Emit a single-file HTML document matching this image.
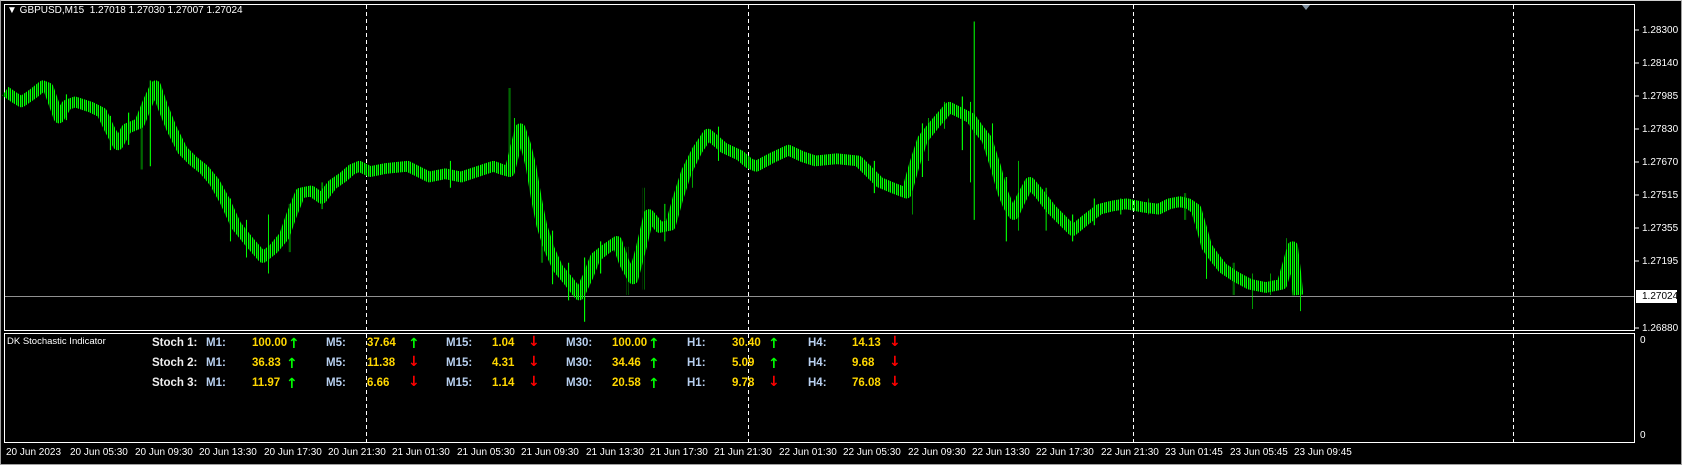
<!DOCTYPE html>
<html><head><meta charset="utf-8"><style>
html,body{margin:0;padding:0;background:#000;width:1682px;height:465px;overflow:hidden;font-family:"Liberation Sans",Arial,sans-serif;}
#w{position:relative;width:1680px;height:463px;border:1px solid #a0a0a0;border-top-color:#d0d0d0;background:#000}
.t{position:absolute;font-size:10px;color:#fff;white-space:nowrap}
.r{position:absolute;font-size:11.5px;font-weight:bold;white-space:nowrap}
.a{font-family:"DejaVu Sans",sans-serif;font-size:14px;line-height:14px}
.lb{color:#f0f0f0}.tf{color:#b8d0f0}.v{color:#ffd700}.up{color:#00ff00}.dn{color:#ff0000}
</style></head><body><div id="w">
<svg width="1682" height="465" style="position:absolute;left:-1px;top:-1px">
<defs>
<pattern id="p" width="4" height="10" patternUnits="userSpaceOnUse"><rect x="3" y="0" width="1" height="10" fill="#000"/><rect x="1" y="0" width="1" height="10" fill="#000" opacity="0.6"/></pattern>
<mask id="m"><rect x="0" y="0" width="1682" height="465" fill="#fff"/><rect x="0" y="0" width="1682" height="330" fill="url(#p)"/></mask>
</defs>
<rect x="4.5" y="4.5" width="1630" height="326" fill="none" stroke="#fff"/>
<rect x="4.5" y="333.5" width="1630" height="109" fill="none" stroke="#fff"/>
<g stroke="#fff" stroke-dasharray="4,3" stroke-width="1">
<line x1="366.5" y1="5" x2="366.5" y2="442"/><line x1="748.5" y1="5" x2="748.5" y2="442"/>
<line x1="1133.5" y1="5" x2="1133.5" y2="442"/><line x1="1513.5" y1="5" x2="1513.5" y2="442"/>
</g>
<line x1="5" y1="296.5" x2="1634" y2="296.5" stroke="#909090"/>
<polygon points="1302,5 1310,5 1306,10" fill="#8090a0"/>
<g mask="url(#m)"><g transform="scale(1.0727)" fill="none" stroke="#00ff00" stroke-linejoin="round">
<polyline stroke-width="10" points="5,85 12,90 20,95 30,88 40,80 45,82 55,110 62,98 70,95 85,100 95,105 102,120 110,135 118,120 130,115 138,95 145,80 152,100 160,120 170,140 180,150 190,158 200,170 210,188 220,210 232,225 245,240 255,232 265,220 272,200 280,180 290,178 300,185 310,172 320,165 328,158 335,155 345,160 360,157 380,155 390,160 400,165 415,162 430,165 445,160 460,155 468,158 475,160 480,140 485,120 490,135 495,155 500,185 505,210 512,232 520,250 530,262 540,275 548,258 555,240 565,232 575,225 582,245 590,260 598,230 605,200 615,212 625,210 632,185 640,160 650,140 660,125 675,138 690,145 698,152 705,155 720,147 735,140 748,146 760,150 780,148 800,150 810,160 820,170 832,175 845,180 852,155 860,130 872,115 885,100 895,105 905,110 912,120 920,130 928,155 935,180 940,192 945,200 952,185 960,170 970,182 980,195 990,205 1000,215 1012,205 1025,195 1037,192 1050,190 1065,193 1080,195 1090,190 1100,188 1108,190 1115,195 1120,212 1125,230 1132,240 1140,250 1152,258 1165,265 1180,268 1195,265 1200,248 1205,230 1208,255 1210,275"/>
<g stroke-width="1.4">
<path d="M140 75V155M132 110V158M475 82V165M908 20V205M897 90V140M545 240V300M1125 215V260M1167 255V288M1212 265V290M480 110V160M860 115V165M600 175V270M250 200V255M905 95V170M62 88V112M103 108V140M120 105V135M215 185V225M230 205V240M270 190V235M300 170V195M420 150V175M505 195V245M515 215V265M530 245V280M560 225V255M585 230V275M620 190V225M645 150V175M670 118V150M815 150V180M850 165V200M865 110V150M880 95V120M925 115V160M938 165V225M950 150V215M975 175V215M1000 200V225M1020 185V210M1045 185V200M1070 185V200M1105 180V205M1150 245V275M1185 255V275M1200 222V260"/>
</g></g></g>
<g stroke="#fff"><line x1="1635" y1="30" x2="1639" y2="30"/><line x1="1635" y1="63" x2="1639" y2="63"/><line x1="1635" y1="96" x2="1639" y2="96"/><line x1="1635" y1="129" x2="1639" y2="129"/><line x1="1635" y1="162" x2="1639" y2="162"/><line x1="1635" y1="195" x2="1639" y2="195"/><line x1="1635" y1="228" x2="1639" y2="228"/><line x1="1635" y1="261" x2="1639" y2="261"/><line x1="1635" y1="328" x2="1639" y2="328"/></g>
<rect x="1636" y="290" width="41" height="13" fill="#fff"/>
</svg>
<div class="t" style="left:6px;top:4px">▼ GBPUSD,M15&nbsp; 1.27018 1.27030 1.27007 1.27024</div>
<div class="t" style="left:1641px;top:24px">1.28300</div>
<div class="t" style="left:1641px;top:57px">1.28140</div>
<div class="t" style="left:1641px;top:90px">1.27985</div>
<div class="t" style="left:1641px;top:123px">1.27830</div>
<div class="t" style="left:1641px;top:156px">1.27670</div>
<div class="t" style="left:1641px;top:189px">1.27515</div>
<div class="t" style="left:1641px;top:222px">1.27355</div>
<div class="t" style="left:1641px;top:255px">1.27195</div>
<div class="t" style="left:1641px;top:290px;color:#000">1.27024</div>
<div class="t" style="left:1641px;top:322px">1.26880</div>
<div class="t" style="left:1639px;top:334px">0</div>
<div class="t" style="left:1639px;top:429px">0</div>
<div class="t" style="left:6px;top:335px;font-size:9.5px">DK Stochastic Indicator</div>

<div class="r lb" style="left:151px;top:336px">Stoch 1:</div>
<div class="r tf" style="left:205px;top:336px">M1:</div><div class="r v" style="left:251px;top:336px">100.00</div><div class="r a up" style="left:287px;top:336px">↑</div>
<div class="r tf" style="left:325px;top:336px">M5:</div><div class="r v" style="left:366px;top:336px">37.64</div><div class="r a up" style="left:407px;top:336px">↑</div>
<div class="r tf" style="left:445px;top:336px">M15:</div><div class="r v" style="left:491px;top:336px">1.04</div><div class="r a dn" style="left:527px;top:334px">↓</div>
<div class="r tf" style="left:565px;top:336px">M30:</div><div class="r v" style="left:611px;top:336px">100.00</div><div class="r a up" style="left:647px;top:336px">↑</div>
<div class="r tf" style="left:686px;top:336px">H1:</div><div class="r v" style="left:731px;top:336px">30.40</div><div class="r a up" style="left:767px;top:336px">↑</div>
<div class="r tf" style="left:807px;top:336px">H4:</div><div class="r v" style="left:851px;top:336px">14.13</div><div class="r a dn" style="left:888px;top:334px">↓</div>

<div class="r lb" style="left:151px;top:356px">Stoch 2:</div>
<div class="r tf" style="left:205px;top:356px">M1:</div><div class="r v" style="left:251px;top:356px">36.83</div><div class="r a up" style="left:285px;top:356px">↑</div>
<div class="r tf" style="left:325px;top:356px">M5:</div><div class="r v" style="left:366px;top:356px">11.38</div><div class="r a dn" style="left:407px;top:354px">↓</div>
<div class="r tf" style="left:445px;top:356px">M15:</div><div class="r v" style="left:491px;top:356px">4.31</div><div class="r a dn" style="left:527px;top:354px">↓</div>
<div class="r tf" style="left:565px;top:356px">M30:</div><div class="r v" style="left:611px;top:356px">34.46</div><div class="r a up" style="left:647px;top:356px">↑</div>
<div class="r tf" style="left:686px;top:356px">H1:</div><div class="r v" style="left:731px;top:356px">5.09</div><div class="r a up" style="left:767px;top:356px">↑</div>
<div class="r tf" style="left:807px;top:356px">H4:</div><div class="r v" style="left:851px;top:356px">9.68</div><div class="r a dn" style="left:888px;top:354px">↓</div>

<div class="r lb" style="left:151px;top:376px">Stoch 3:</div>
<div class="r tf" style="left:205px;top:376px">M1:</div><div class="r v" style="left:251px;top:376px">11.97</div><div class="r a up" style="left:285px;top:376px">↑</div>
<div class="r tf" style="left:325px;top:376px">M5:</div><div class="r v" style="left:366px;top:376px">6.66</div><div class="r a dn" style="left:407px;top:374px">↓</div>
<div class="r tf" style="left:445px;top:376px">M15:</div><div class="r v" style="left:491px;top:376px">1.14</div><div class="r a dn" style="left:527px;top:374px">↓</div>
<div class="r tf" style="left:565px;top:376px">M30:</div><div class="r v" style="left:611px;top:376px">20.58</div><div class="r a up" style="left:647px;top:376px">↑</div>
<div class="r tf" style="left:686px;top:376px">H1:</div><div class="r v" style="left:731px;top:376px">9.78</div><div class="r a dn" style="left:767px;top:374px">↓</div>
<div class="r tf" style="left:807px;top:376px">H4:</div><div class="r v" style="left:851px;top:376px">76.08</div><div class="r a dn" style="left:888px;top:374px">↓</div>

<div class="t" style="left:5px;top:446px">20 Jun 2023</div>
<div class="t" style="left:69px;top:446px">20 Jun 05:30</div>
<div class="t" style="left:134px;top:446px">20 Jun 09:30</div>
<div class="t" style="left:198px;top:446px">20 Jun 13:30</div>
<div class="t" style="left:263px;top:446px">20 Jun 17:30</div>
<div class="t" style="left:327px;top:446px">20 Jun 21:30</div>
<div class="t" style="left:391px;top:446px">21 Jun 01:30</div>
<div class="t" style="left:456px;top:446px">21 Jun 05:30</div>
<div class="t" style="left:520px;top:446px">21 Jun 09:30</div>
<div class="t" style="left:585px;top:446px">21 Jun 13:30</div>
<div class="t" style="left:649px;top:446px">21 Jun 17:30</div>
<div class="t" style="left:713px;top:446px">21 Jun 21:30</div>
<div class="t" style="left:778px;top:446px">22 Jun 01:30</div>
<div class="t" style="left:842px;top:446px">22 Jun 05:30</div>
<div class="t" style="left:907px;top:446px">22 Jun 09:30</div>
<div class="t" style="left:971px;top:446px">22 Jun 13:30</div>
<div class="t" style="left:1035px;top:446px">22 Jun 17:30</div>
<div class="t" style="left:1100px;top:446px">22 Jun 21:30</div>
<div class="t" style="left:1164px;top:446px">23 Jun 01:45</div>
<div class="t" style="left:1229px;top:446px">23 Jun 05:45</div>
<div class="t" style="left:1293px;top:446px">23 Jun 09:45</div>
</div>
</body></html>
